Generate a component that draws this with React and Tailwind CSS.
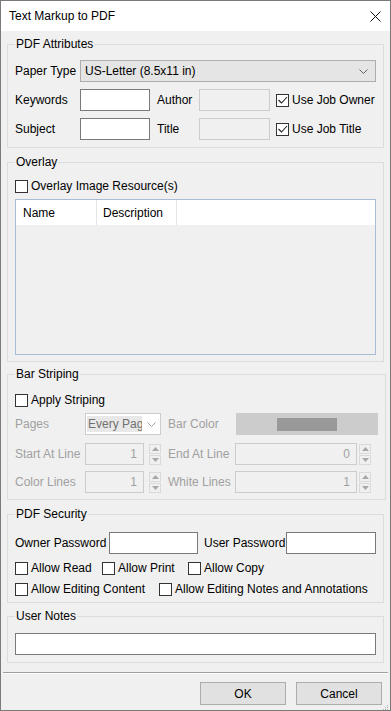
import React from "react";

function Check({ checked }) {
  return (
    <span className="w-[13px] h-[13px] border border-[#333333] bg-white flex items-center justify-center shrink-0">
      {checked && (
        <svg width="11" height="11" viewBox="0 0 11 11">
          <path d="M1.5 5 L4.5 8 L10 2" stroke="#222" strokeWidth="1.1" fill="none" />
        </svg>
      )}
    </span>
  );
}

function CheckLabel({ checked, label, className = "" }) {
  return (
    <div className={`flex items-center gap-[3px] h-[16px] ${className}`}>
      <Check checked={checked} />
      <span className="whitespace-nowrap">{label}</span>
    </div>
  );
}

function Group({ title, className = "", children }) {
  return (
    <fieldset className={`border border-[#dcdcdc] px-[7px] ${className}`}>
      <legend className="px-px leading-[14px]">{title}</legend>
      {children}
    </fieldset>
  );
}

function Spin() {
  const box = "w-[12px] h-[10px] border border-[#dadada] bg-[#f0f0f0] flex items-center justify-center";
  return (
    <div className="flex flex-col gap-px ml-[5px] mr-[7px]">
      <div className={box}>
        <svg width="7" height="4" viewBox="0 0 7 4"><path d="M0 4 L3.5 0 L7 4Z" fill="#a8a8a8" /></svg>
      </div>
      <div className={box}>
        <svg width="7" height="4" viewBox="0 0 7 4"><path d="M0 0 L3.5 4 L7 0Z" fill="#a8a8a8" /></svg>
      </div>
    </div>
  );
}

function Chevron({ color = "#606060" }) {
  return (
    <svg width="9" height="5" viewBox="0 0 9 5">
      <path d="M0.5 0.5 L4.5 4.5 L8.5 0.5" stroke={color} strokeWidth="1" fill="none" />
    </svg>
  );
}

const inputCls = "h-[22px] border border-[#7a7a7a] bg-white";
const disabledCls = "h-[22px] border border-[#cccccc] bg-[#f0f0f0]";
const grayCls = "text-[#a0a0a0]";

export default function App() {
  return (
    <div className="w-[391px] h-[711px] border border-[#7a7a7a] bg-[#f0f0f0] flex flex-col text-[12px] text-black font-['Liberation_Sans',Arial,sans-serif]">
      <div className="h-[30px] bg-white flex items-center justify-between pl-2 pr-[9px] shrink-0">
        <span>Text Markup to PDF</span>
        <svg width="11" height="11" viewBox="0 0 11 11">
          <path d="M0.5 0.5 L10.5 10.5 M10.5 0.5 L0.5 10.5" stroke="#111" strokeWidth="1" />
        </svg>
      </div>

      <div className="px-[6px] flex flex-col">
        <Group title="PDF Attributes" className="mt-[6px] pt-[9px] pb-[7px]">
          <div className="flex items-center h-[22px]">
            <span className="w-[65px]">Paper Type</span>
            <div className="w-[296px] h-[22px] border border-[#adadad] bg-[#e5e5e5] flex items-center justify-between pl-[4px] pr-[7px]">
              <span>US-Letter (8.5x11 in)</span>
              <Chevron />
            </div>
          </div>
          <div className="flex items-center h-[22px] mt-[7px]">
            <span className="w-[65px]">Keywords</span>
            <div className={`${inputCls} w-[70px]`} />
            <span className="w-[42px] ml-[7px]">Author</span>
            <div className={`${disabledCls} w-[71px]`} />
            <CheckLabel checked label="Use Job Owner" className="ml-[6px]" />
          </div>
          <div className="flex items-center h-[22px] mt-[7px]">
            <span className="w-[65px]">Subject</span>
            <div className={`${inputCls} w-[70px]`} />
            <span className="w-[42px] ml-[7px]">Title</span>
            <div className={`${disabledCls} w-[71px]`} />
            <CheckLabel checked label="Use Job Title" className="ml-[6px]" />
          </div>
        </Group>

        <Group title="Overlay" className="mt-[7px] pt-[9px] pb-[6px]">
          <CheckLabel label="Overlay Image Resource(s)" />
          <div className="mt-[5px] h-[156px] border border-[#a9bcd5] bg-[#f0f0f0] flex flex-col">
            <div className="h-[25px] bg-white flex">
              <div className="w-[81px] border-r border-[#e5e5e5] flex items-center pl-[7px]">Name</div>
              <div className="w-[80px] border-r border-[#e5e5e5] flex items-center pl-[6px]">Description</div>
            </div>
          </div>
        </Group>

        <Group title="Bar Striping" className="mt-[5px] pt-[11px] pb-[6px]">
          <CheckLabel label="Apply Striping" />
          <div className={`flex items-center h-[22px] mt-[5px] ${grayCls}`}>
            <span className="w-[70px]">Pages</span>
            <div className="w-[76px] h-[22px] border border-[#cccccc] bg-white flex items-center justify-between pl-[1px] pr-[4px]">
              <span className="w-[55px] h-[16px] bg-[#e8e8e8] text-[#707070] overflow-hidden whitespace-nowrap pl-[1px] leading-[16px]">Every Page</span>
              <Chevron color="#a0a0a0" />
            </div>
            <span className="w-[68px] ml-[7px]">Bar Color</span>
            <div className="flex-1 h-[22px] bg-[#cccccc] flex items-center justify-center">
              <div className="w-[60px] h-[13px] bg-[#999999]" />
            </div>
          </div>
          <div className={`flex items-center h-[22px] mt-[8px] ${grayCls}`}>
            <span className="w-[70px]">Start At Line</span>
            <div className={`${disabledCls} w-[59px] flex items-center justify-end pr-[6px]`}>1</div>
            <Spin />
            <span className="w-[67px]">End At Line</span>
            <div className={`${disabledCls} w-[122px] flex items-center justify-end pr-[6px]`}>0</div>
            <div className="ml-[-3px]"><Spin /></div>
          </div>
          <div className={`flex items-center h-[22px] mt-[6px] ${grayCls}`}>
            <span className="w-[70px]">Color Lines</span>
            <div className={`${disabledCls} w-[59px] flex items-center justify-end pr-[6px]`}>1</div>
            <Spin />
            <span className="w-[67px]">White Lines</span>
            <div className={`${disabledCls} w-[122px] flex items-center justify-end pr-[6px]`}>1</div>
            <div className="ml-[-3px]"><Spin /></div>
          </div>
        </Group>

        <Group title="PDF Security" className="mt-[7px] pt-[11px] pb-[5px]">
          <div className="flex items-center h-[22px]">
            <span className="w-[94px]">Owner Password</span>
            <div className={`${inputCls} w-[89px]`} />
            <span className="w-[82px] ml-[6px]">User Password</span>
            <div className={`${inputCls} flex-1`} />
          </div>
          <div className="flex items-center mt-[6px]">
            <CheckLabel label="Allow Read" className="w-[87px]" />
            <CheckLabel label="Allow Print" className="w-[86px]" />
            <CheckLabel label="Allow Copy" />
          </div>
          <div className="flex items-center mt-[5px]">
            <CheckLabel label="Allow Editing Content" className="w-[144px]" />
            <CheckLabel label="Allow Editing Notes and Annotations" />
          </div>
        </Group>

        <Group title="User Notes" className="mt-[6px] pt-[10px] pb-[7px]">
          <div className={`${inputCls} w-full`} />
        </Group>
      </div>

      <div className="mt-[9px] mx-[2px] border-t border-[#a0a0a0] border-b border-b-white" />

      <div className="flex justify-end gap-[10px] mt-[8px] pr-[8px]">
        <button className="w-[86px] h-[23px] border border-[#adadad] bg-[#e1e1e1]">OK</button>
        <button className="w-[86px] h-[23px] border border-[#adadad] bg-[#e1e1e1]">Cancel</button>
      </div>

      <div className="flex-1 flex items-end justify-end pr-[1px] pb-[1px]">
        <svg width="7" height="7" viewBox="0 0 7 7">
          <rect x="5" y="0" width="1" height="1" fill="#b0b0b0" />
          <rect x="3" y="2" width="1" height="1" fill="#b0b0b0" />
          <rect x="5" y="2" width="1" height="1" fill="#b0b0b0" />
          <rect x="1" y="4" width="1" height="1" fill="#b0b0b0" />
          <rect x="3" y="4" width="1" height="1" fill="#b0b0b0" />
          <rect x="5" y="4" width="1" height="1" fill="#b0b0b0" />
        </svg>
      </div>
    </div>
  );
}
